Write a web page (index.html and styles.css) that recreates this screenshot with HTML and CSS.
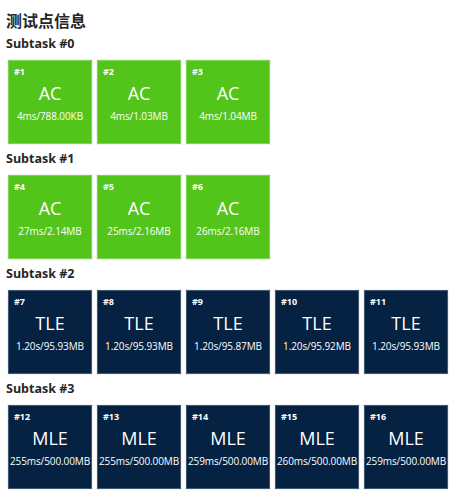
FILE: index.html
```html
<!DOCTYPE html>
<html lang="zh-CN">
<head>
  <meta charset="UTF-8">
  <title>测试点信息</title>
  <link rel="stylesheet" href="styles.css">
</head>
<body>
  <h2 class="title">测试点信息</h2>

  <div class="subtask">
    <h3>Subtask #0</h3>
    <div class="cases">
      <div class="case ac"><div class="id">#1</div><div class="status">AC</div><div class="info">4ms/788.00KB</div></div>
      <div class="case ac"><div class="id">#2</div><div class="status">AC</div><div class="info">4ms/1.03MB</div></div>
      <div class="case ac"><div class="id">#3</div><div class="status">AC</div><div class="info">4ms/1.04MB</div></div>
    </div>
  </div>

  <div class="subtask">
    <h3>Subtask #1</h3>
    <div class="cases">
      <div class="case ac"><div class="id">#4</div><div class="status">AC</div><div class="info">27ms/2.14MB</div></div>
      <div class="case ac"><div class="id">#5</div><div class="status">AC</div><div class="info">25ms/2.16MB</div></div>
      <div class="case ac"><div class="id">#6</div><div class="status">AC</div><div class="info">26ms/2.16MB</div></div>
    </div>
  </div>

  <div class="subtask">
    <h3>Subtask #2</h3>
    <div class="cases">
      <div class="case tle"><div class="id">#7</div><div class="status">TLE</div><div class="info">1.20s/95.93MB</div></div>
      <div class="case tle"><div class="id">#8</div><div class="status">TLE</div><div class="info">1.20s/95.93MB</div></div>
      <div class="case tle"><div class="id">#9</div><div class="status">TLE</div><div class="info">1.20s/95.87MB</div></div>
      <div class="case tle"><div class="id">#10</div><div class="status">TLE</div><div class="info">1.20s/95.92MB</div></div>
      <div class="case tle"><div class="id">#11</div><div class="status">TLE</div><div class="info">1.20s/95.93MB</div></div>
    </div>
  </div>

  <div class="subtask">
    <h3>Subtask #3</h3>
    <div class="cases">
      <div class="case mle"><div class="id">#12</div><div class="status">MLE</div><div class="info">255ms/500.00MB</div></div>
      <div class="case mle"><div class="id">#13</div><div class="status">MLE</div><div class="info">255ms/500.00MB</div></div>
      <div class="case mle"><div class="id">#14</div><div class="status">MLE</div><div class="info">259ms/500.00MB</div></div>
      <div class="case mle"><div class="id">#15</div><div class="status">MLE</div><div class="info">260ms/500.00MB</div></div>
      <div class="case mle"><div class="id">#16</div><div class="status">MLE</div><div class="info">259ms/500.00MB</div></div>
    </div>
  </div>
</body>
</html>
```

FILE: styles.css
```css
* {
  margin: 0;
  padding: 0;
  box-sizing: border-box;
}

body {
  background: #fff;
  color: #262626;
  font-family: 'Open Sans', 'Noto Sans CJK SC', sans-serif;
  padding: 10px 6px 0;
}

.title {
  font-size: 16px;
  line-height: 22px;
  font-weight: bold;
}

/* Subtask block */
.subtask h3 {
  font-size: 12.5px;
  line-height: 18px;
  font-weight: bold;
  margin-top: 3px;
}

.cases {
  display: flex;
  gap: 5px;
  padding-left: 2px;
  margin-top: 7px;
  margin-bottom: 6px;
}

/* One test case square */
.case {
  width: 84px;
  height: 84px;
  color: #fff;
  padding-top: 5px;
  text-align: center;
  border: 1px solid rgba(255, 255, 255, 0.25);
  outline: 1px solid rgba(0, 0, 0, 0.05);
}

.case .id {
  text-align: left;
  padding-left: 5px;
  font-size: 9px;
  line-height: 12px;
  font-weight: bold;
}

.case .status {
  font-size: 18px;
  line-height: 24px;
  margin-top: 3px;
}

.case .info {
  font-size: 10px;
  line-height: 14px;
  margin-top: 4px;
  white-space: nowrap;
  letter-spacing: -0.1px;
}

.ac {
  background: #52c41a;
}

.tle, .mle {
  background: #052242;
}
```
